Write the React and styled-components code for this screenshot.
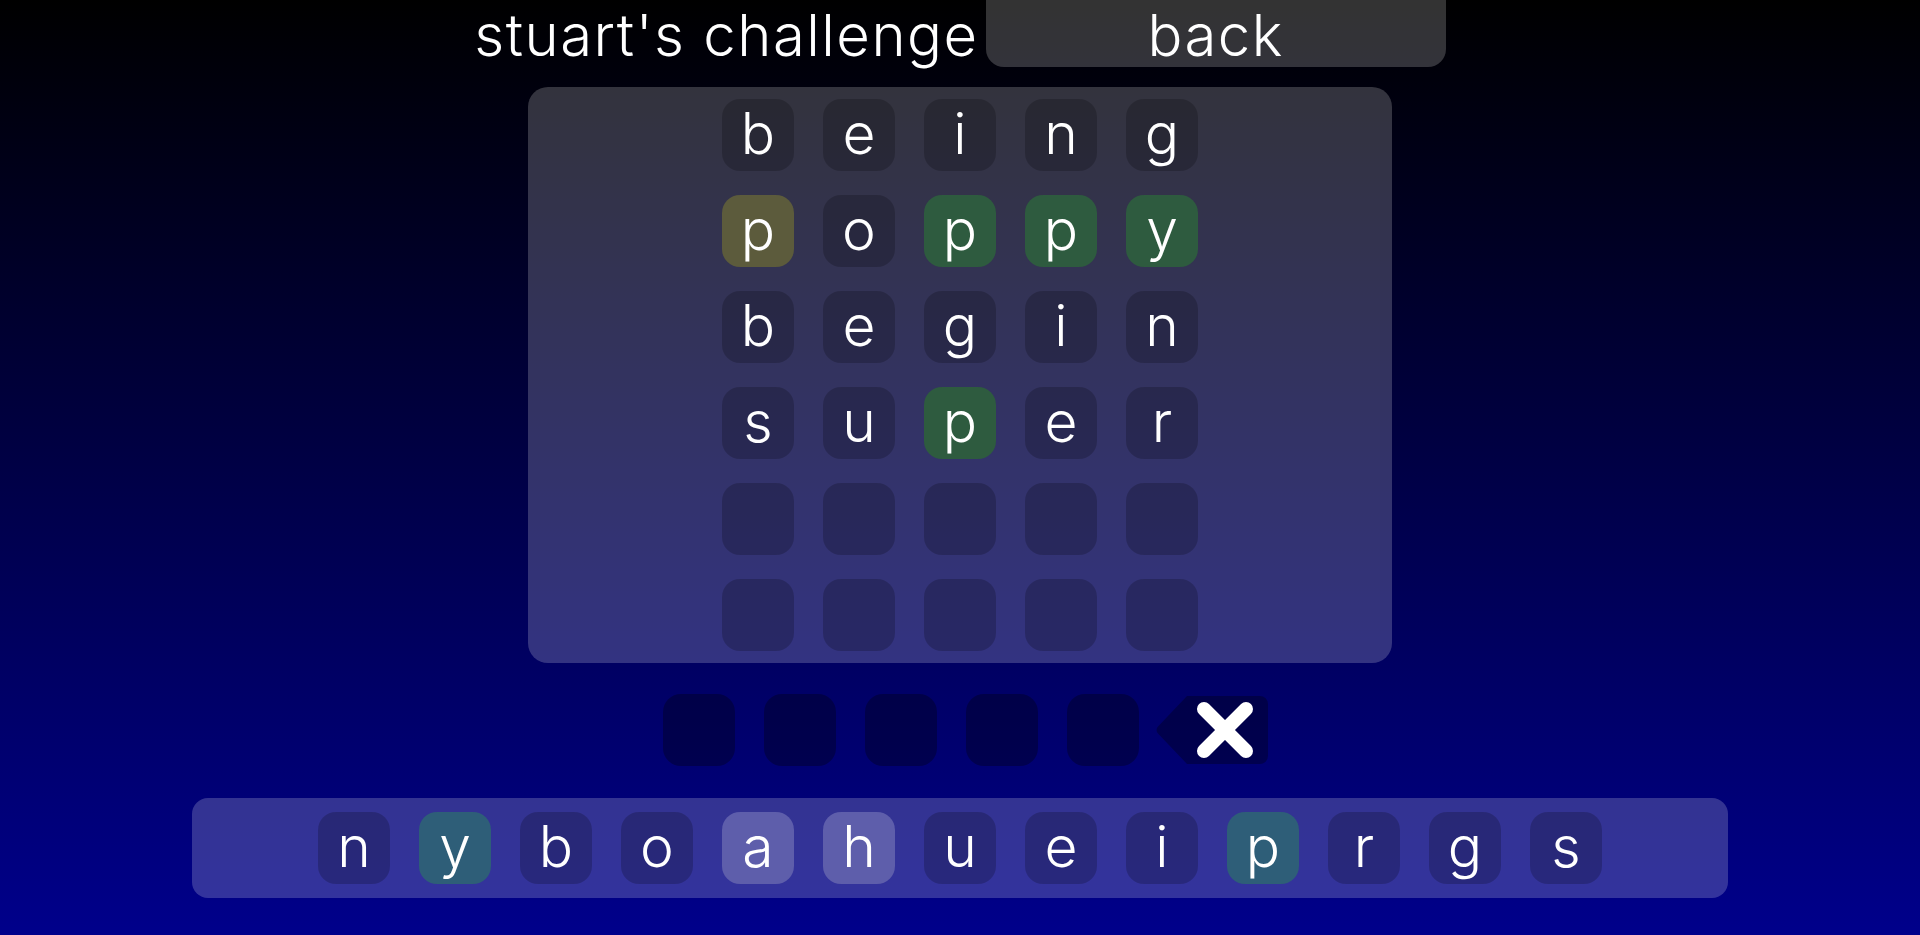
import React from "react";
import styled, { createGlobalStyle } from "styled-components";

const GlobalStyle = createGlobalStyle`
  html, body { margin: 0; padding: 0; }
  body {
    min-height: 100vh;
    background: linear-gradient(to bottom, #000000, #00008b);
    font-family: Inter, "Open Sans", sans-serif;
    font-weight: 300;
    color: #ffffff;
    overflow: hidden;
  }
`;

const Page = styled.div`
  display: flex;
  flex-direction: column;
  align-items: center;
  min-height: 935px;
`;

const Header = styled.header`
  display: flex;
  align-items: flex-start;
  justify-content: center;
  gap: 7px;
  height: 67px;
`;

const Title = styled.h1`
  margin: 0;
  padding-top: 4px;
  font-size: 58px;
  font-weight: 300;
  letter-spacing: 1.5px;
  line-height: 63px;
  white-space: nowrap;
`;

const BackButton = styled.button`
  width: 460px;
  height: 67px;
  border: none;
  border-radius: 0 0 18px 18px;
  background: rgba(255, 255, 255, 0.2);
  color: #fff;
  font-family: inherit;
  font-size: 58px;
  font-weight: 300;
  letter-spacing: 1.5px;
  line-height: 63px;
  padding: 4px 0 0;
  cursor: pointer;
`;

const Board = styled.section`
  margin-top: 20px;
  width: 864px;
  box-sizing: border-box;
  padding: 12px 0;
  border-radius: 20px;
  background: rgba(255, 255, 255, 0.2);
  display: grid;
  grid-template-columns: repeat(5, 72px);
  grid-auto-rows: 72px;
  column-gap: 29px;
  row-gap: 24px;
  justify-content: center;
`;

const tileColors = {
  empty: "rgba(0, 0, 0, 0.2)",
  miss: "rgba(0, 0, 0, 0.2)",
  present: "#5c5b3c",
  correct: "#2e5b3f",
};

const Tile = styled.div`
  width: 72px;
  height: 72px;
  border-radius: 18px;
  background: ${(p) => tileColors[p.$state] || tileColors.empty};
  display: flex;
  align-items: center;
  justify-content: center;
  font-size: 57px;
  line-height: 1;
  padding-bottom: 3px;
  box-sizing: border-box;
`;

const InputRow = styled.div`
  margin-top: 31px;
  display: flex;
  align-items: center;
  justify-content: center;
  gap: 29px;
  padding-left: 11px;
`;

const InputTile = styled.div`
  width: 72px;
  height: 72px;
  border-radius: 18px;
  background: rgba(0, 0, 0, 0.3);
`;

const BackspaceKey = styled.button`
  margin-left: -13px;
  width: 113px;
  height: 68px;
  padding: 0;
  border: none;
  background: none;
  cursor: pointer;
  display: block;
  svg { display: block; }
`;

const Keyboard = styled.div`
  margin-top: 32px;
  width: 1536px;
  height: 100px;
  border-radius: 16px;
  background: rgba(255, 255, 255, 0.2);
  display: flex;
  align-items: center;
  justify-content: center;
  gap: 29px;
`;

const keyColors = {
  unused: "rgba(0, 0, 0, 0.2)",
  present: "#2e5e78",
  absent: "#5e5eab",
};

const Key = styled.button`
  width: 72px;
  height: 72px;
  border: none;
  border-radius: 18px;
  background: ${(p) => keyColors[p.$state] || keyColors.unused};
  color: #fff;
  font-family: inherit;
  font-weight: 300;
  font-size: 57px;
  line-height: 1;
  padding: 0 0 3px;
  display: flex;
  align-items: center;
  justify-content: center;
  cursor: pointer;
`;

const guesses = [
  [["b"], ["e"], ["i"], ["n"], ["g"]],
  [["p", "present"], ["o"], ["p", "correct"], ["p", "correct"], ["y", "correct"]],
  [["b"], ["e"], ["g"], ["i"], ["n"]],
  [["s"], ["u"], ["p", "correct"], ["e"], ["r"]],
];

const keys = [
  ["n"], ["y", "present"], ["b"], ["o"], ["a", "absent"], ["h", "absent"],
  ["u"], ["e"], ["i"], ["p", "present"], ["r"], ["g"], ["s"],
];

function BackspaceIcon() {
  return (
    <svg width="113" height="68" viewBox="0 0 113 68">
      <path
        d="M32 0 H105 A8 8 0 0 1 113 8 V60 A8 8 0 0 1 105 68 H32 L3 37.5 A5 5 0 0 1 3 30.5 Z"
        fill="rgba(0,0,0,0.3)"
      />
      <g stroke="#fff" strokeWidth="14" strokeLinecap="round">
        <line x1="49" y1="13" x2="91" y2="55" />
        <line x1="91" y1="13" x2="49" y2="55" />
      </g>
    </svg>
  );
}

export default function App() {
  const rows = [];
  for (let r = 0; r < 6; r++) {
    const g = guesses[r];
    for (let c = 0; c < 5; c++) {
      const cell = g ? g[c] : null;
      rows.push(
        <Tile key={`${r}-${c}`} $state={cell ? cell[1] || "miss" : "empty"}>
          {cell ? cell[0] : ""}
        </Tile>
      );
    }
  }
  return (
    <>
      <GlobalStyle />
      <Page>
        <Header>
          <Title>stuart's challenge</Title>
          <BackButton>back</BackButton>
        </Header>
        <Board>{rows}</Board>
        <InputRow>
          {[0, 1, 2, 3, 4].map((i) => (
            <InputTile key={i} />
          ))}
          <BackspaceKey aria-label="backspace">
            <BackspaceIcon />
          </BackspaceKey>
        </InputRow>
        <Keyboard>
          {keys.map(([k, s], i) => (
            <Key key={i} $state={s}>
              {k}
            </Key>
          ))}
        </Keyboard>
      </Page>
    </>
  );
}
